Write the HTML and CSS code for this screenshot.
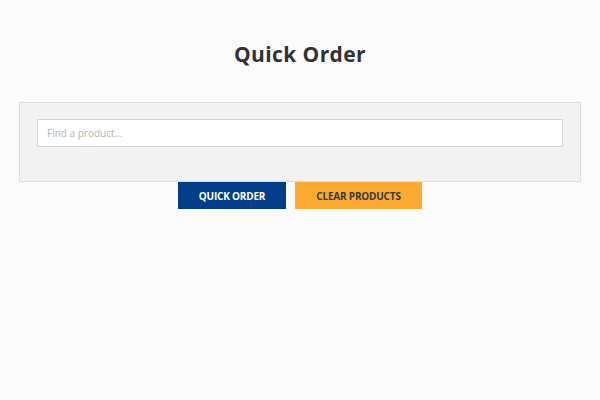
FILE: index.html
```html
<!DOCTYPE html>
<html>
<head>
<meta charset="utf-8">
<link rel="stylesheet" href="styles.css">
</head>
<body>
<div class="page">
  <h1 class="title">Quick Order</h1>
  <div class="panel">
    <input class="search" type="text" placeholder="Find a product...">
  </div>
  <div class="actions">
    <button class="btn btn-primary">QUICK ORDER</button>
    <button class="btn btn-secondary">CLEAR PRODUCTS</button>
  </div>
</div>
</body>
</html>
```
FILE: styles.css
```css
html, body {
  margin: 0;
  padding: 0;
  background: #fbfbfb;
}
.page {
  width: 562px;
  margin: 0 auto;
  padding-top: 40px;
  font-family: "Open Sans", "Liberation Sans", sans-serif;
}
.title {
  margin: 0 0 34px 0;
  text-align: center;
  font-family: "Open Sans", sans-serif;
  font-weight: 700;
  font-size: 21px;
  line-height: 28px;
  color: #333333;
  letter-spacing: 0.4px;
}
.panel {
  box-sizing: border-box;
  height: 80px;
  background: #f2f2f2;
  border: 1px solid #dcdcdc;
  padding: 16px 17px;
}
.search {
  box-sizing: border-box;
  display: block;
  width: 100%;
  height: 28px;
  border: 1px solid #d6d6d6;
  background: #ffffff;
  padding: 0 9px;
  font-family: "Open Sans", sans-serif;
  font-size: 10px;
  color: #333;
  outline: none;
}
.search::placeholder {
  color: #b4b4b4;
}
.actions {
  display: flex;
  justify-content: center;
  gap: 9px;
}
.btn {
  height: 27px;
  border: none;
  font-family: "Open Sans", sans-serif;
  font-weight: 700;
  font-size: 10px;
  letter-spacing: -0.2px;
  padding: 0;
  cursor: pointer;
}
.btn-primary {
  width: 108px;
  background: #023e8a;
  color: #ffffff;
}
.btn-secondary {
  width: 127px;
  background: #fbab32;
  color: #3a3a3a;
}
```
